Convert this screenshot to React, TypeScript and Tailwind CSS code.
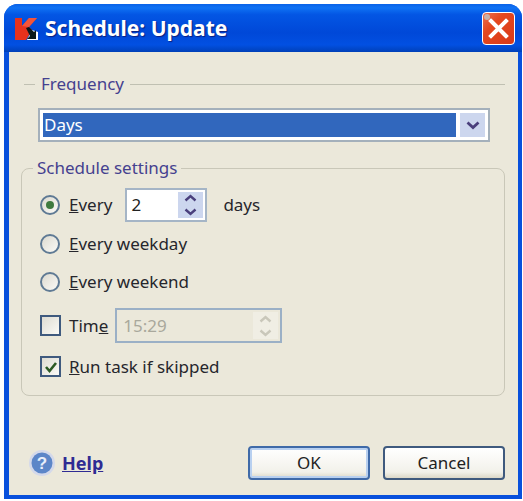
import { ReactNode } from 'react'

const font = "font-['Noto_Sans','DejaVu_Sans',sans-serif]"

function KLogo() {
  return (
    <svg width="25" height="25" viewBox="0 0 25 25" className="shrink-0">
      <path d="M1 2h7v8l7-8h8l-8 9 3 3-6 10H1z" fill="#e8321c" />
      <path d="M8 10l7-8h8l-8 9z" fill="#f4553a" />
      <path d="M13 24l5-10 6 2v8z" fill="#fff" />
      <path d="M12 12l3-1 5 5 2-2v9h-9l3-3z" fill="#0c1a1a" />
    </svg>
  )
}

function CloseButton() {
  return (
    <button className="relative w-[33px] h-[33px] rounded-[4px] border border-white bg-[linear-gradient(135deg,#ec7052_0%,#e5481f_35%,#d8391a_100%)] flex items-center justify-center">
      <span className="absolute top-[1px] left-[1px] w-[6px] h-[6px] rounded-full bg-[#c8b0a8]" />
      <svg width="23" height="23" viewBox="0 0 23 23">
        <path d="M4 4l15 15M19 4L4 19" stroke="#fff" strokeWidth="4" strokeLinecap="square" />
      </svg>
    </button>
  )
}

function Radio({ checked, children }: { checked?: boolean; children: ReactNode }) {
  return (
    <div className="flex items-center gap-[9px] h-[20px]">
      <span className="w-[20px] h-[20px] rounded-full border-2 border-[#5f7a94] bg-[linear-gradient(135deg,#dcdad0,#fbfaf6)] flex items-center justify-center">
        {checked && <span className="w-[8px] h-[8px] rounded-full bg-[#3f7a3f]" />}
      </span>
      <span className="text-[#26262c]">{children}</span>
    </div>
  )
}

function Checkbox({ checked, children }: { checked?: boolean; children: ReactNode }) {
  return (
    <div className="flex items-center gap-[8px]">
      <span className="w-[21px] h-[21px] border-2 border-[#3f5a7e] bg-[linear-gradient(135deg,#dedcd2,#fbfaf6)] flex items-center justify-center">
        {checked && (
          <svg width="14" height="14" viewBox="0 0 14 14">
            <path d="M2 7l3.5 4L12 3" stroke="#2c5a24" strokeWidth="2.6" fill="none" />
          </svg>
        )}
      </span>
      <span className="text-[#26262c]">{children}</span>
    </div>
  )
}

function Spinner({ color, bg }: { color: string; bg: string }) {
  return (
    <div className={`w-[25px] h-full flex flex-col gap-[1px] ${bg}`}>
      <div className="flex-1 flex items-center justify-center">
        <svg width="13" height="8" viewBox="0 0 13 8">
          <path d="M1.5 6.5l5-4.5 5 4.5" stroke={color} strokeWidth="2.4" fill="none" />
        </svg>
      </div>
      <div className="flex-1 flex items-center justify-center">
        <svg width="13" height="8" viewBox="0 0 13 8">
          <path d="M1.5 1.5l5 4.5 5-4.5" stroke={color} strokeWidth="2.4" fill="none" />
        </svg>
      </div>
    </div>
  )
}

export default function App() {
  return (
    <div className={`w-[523px] h-[501px] bg-white pt-[4px] pb-[2px] pl-[4px] pr-[1px] text-[17px] leading-[20px] ${font}`}>
      <div className="h-full flex flex-col rounded-t-[14px] bg-[#0850dc] overflow-hidden">
        <div className="h-[48px] shrink-0 flex items-center justify-between pl-[10px] pr-[4px] bg-[linear-gradient(180deg,#0a62e8_0%,#0f72f4_8%,#0356e4_22%,#0048d8_60%,#0250e2_85%,#0040b8_100%)]">
          <div className="flex items-center gap-[6px]">
            <KLogo />
            <span className="text-white font-bold text-[21px] [text-shadow:1px_1px_1px_#0a2080]">Schedule: Update</span>
          </div>
          <div className="mr-[3px]">
            <CloseButton />
          </div>
        </div>
        <div className="flex-1 ml-[5px] mr-[4px] mb-[4px] bg-[#ebe8da] flex flex-col pl-[12px] pr-[13px]">
          <div className="flex items-center gap-[6px] mt-[22px] h-[20px] pl-[3px]">
            <span className="w-[11px] h-px bg-[#c0c0b2]" />
            <span className="text-[#45418f]">Frequency</span>
            <span className="flex-1 h-px bg-[#c0c0b2]" />
          </div>
          <div className="mt-[14px] ml-[17px] mr-[15px] h-[34px] border-2 border-[#a4b0bb] bg-white flex items-center p-[3px] gap-[4px]">
            <div className="flex-1 h-full bg-[#3167bd] text-white pl-[1px] flex items-center">Days</div>
            <div className="w-[25px] h-full bg-[#ccd6ee] flex items-center justify-center">
              <svg width="14" height="9" viewBox="0 0 14 9">
                <path d="M1.5 1.5l5.5 5 5.5-5" stroke="#4a3f7c" strokeWidth="2.8" fill="none" />
              </svg>
            </div>
          </div>
          <fieldset className="mt-[16px] h-[238px] border border-[#c9c7b8] rounded-[8px] pl-[18px] min-w-0">
            <legend className="text-[#45418f] -ml-[7px] px-[4px]">Schedule settings</legend>
            <div className="flex flex-col mt-[10px]">
              <div className="flex items-center h-[34px]">
                <Radio checked><u>E</u>very</Radio>
                <div className="ml-[13px] w-[82px] h-[34px] border-2 border-[#a5b5c6] bg-white flex items-center p-[2px]">
                  <span className="flex-1 pl-[2px] text-[#222]">2</span>
                  <Spinner color="#4a3f7c" bg="bg-[#ccd6ee]" />
                </div>
                <span className="ml-[16px] text-[#26262c]">days</span>
              </div>
              <div className="mt-[12px]"><Radio><u>E</u>very weekday</Radio></div>
              <div className="mt-[18px]"><Radio><u>E</u>very weekend</Radio></div>
              <div className="flex items-center h-[35px] mt-[16px]">
                <Checkbox>Tim<u>e</u></Checkbox>
                <div className="ml-[7px] w-[167px] h-[35px] border-2 border-[#9bb0c6] bg-[#ebe8da] flex items-center p-[2px]">
                  <span className="flex-1 pl-[4px] text-[#a9a89c]">15:29</span>
                  <Spinner color="#c9c7ba" bg="bg-[#f0eee4]" />
                </div>
              </div>
              <div className="mt-[13px]"><Checkbox checked><u>R</u>un task if skipped</Checkbox></div>
            </div>
          </fieldset>
          <div className="mt-[50px] flex items-center pl-[8px]">
            <svg width="26" height="26" viewBox="0 0 26 26" className="shrink-0">
              <circle cx="13" cy="13" r="13" fill="#d4d9ea" />
              <circle cx="13" cy="13" r="10.5" fill="#5c86c8" />
              <text x="13" y="19" textAnchor="middle" fontSize="17" fontWeight="700" fill="#e8eefa" fontFamily="Liberation Sans">?</text>
            </svg>
            <a className="ml-[7px] font-bold text-[18px] text-[#2f2b93] underline">Help</a>
            <button className="ml-auto w-[122px] h-[34px] rounded-[4px] border-2 border-[#3f6aa8] bg-[linear-gradient(180deg,#ffffff,#f2f1ea_80%,#dcd8c8)] shadow-[inset_0_0_0_2px_#b8d0f0] text-[#222]">OK</button>
            <button className="ml-[13px] w-[122px] h-[34px] rounded-[4px] border-2 border-[#3f5a7e] bg-[linear-gradient(180deg,#ffffff,#f2f1ea_80%,#dcd8c8)] text-[#222]">Cancel</button>
          </div>
        </div>
      </div>
    </div>
  )
}
